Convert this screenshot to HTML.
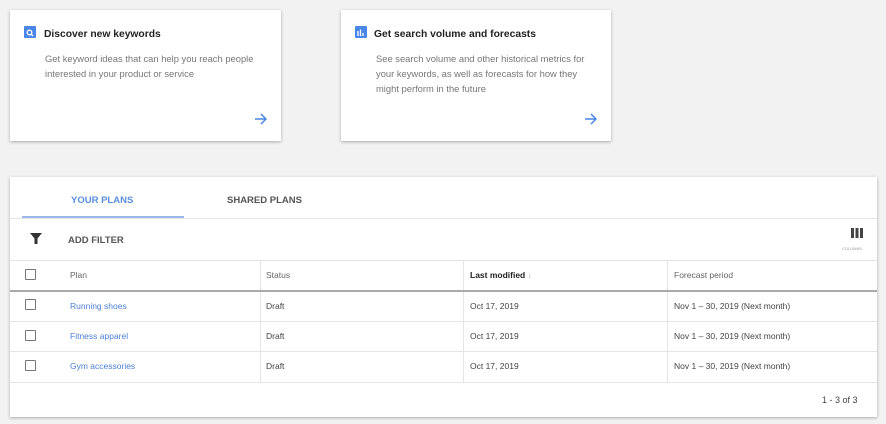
<!DOCTYPE html>
<html><head><style>
body{margin:0;width:886px;height:424px;background:#f2f2f2;font-family:"Liberation Sans",sans-serif;position:relative;overflow:hidden}
.a{position:absolute}
.card{position:absolute;background:#fff;box-shadow:0 1px 3px rgba(0,0,0,.3);top:10px;height:131px}
.t{font-size:10.3px;font-weight:bold;color:#222}
.d{font-size:9.4px;color:#777;line-height:15px}
.ic{width:12px;height:12px;background:#4a86e8;border-radius:1px}
.tbl{position:absolute;left:10px;top:177px;width:867px;height:240px;background:#fff;box-shadow:0 1px 3px rgba(0,0,0,.3)}
.h{height:1px;background:#e4e4e4;position:absolute;left:0;width:867px}
.v{width:1px;background:#e4e4e4;position:absolute}
.cb{position:absolute;left:15px;width:9px;height:9px;border:1.5px solid #777;border-radius:1px}
.c{position:absolute;font-size:8.5px;color:#444}
.l{color:#4a7fd8}
</style></head><body>
<div class="card" style="left:10px;width:271px">
 <div class="a ic" style="left:14px;top:16px"><svg width="12" height="12"><circle cx="5.5" cy="5.5" r="2.3" fill="none" stroke="#fff" stroke-width="1.3"/><path d="M7.2 7.2L9 9" stroke="#fff" stroke-width="1.4"/></svg></div>
 <div class="a t" style="left:34px;top:19px">Discover new keywords</div>
 <div class="a d" style="left:35px;top:41px;width:230px">Get keyword ideas that can help you reach people interested in your product or service</div>
 <svg class="a" style="left:244px;top:103px" width="13" height="12"><path d="M1 6H12M7 1L12 6L7 11" fill="none" stroke="#4a86e8" stroke-width="1.5"/></svg>
</div>
<div class="card" style="left:341px;width:270px">
 <div class="a ic" style="left:14px;top:16px"><svg width="12" height="12"><path d="M3 9V4M5.5 9V2.5M8 9V6" stroke="#fff" stroke-width="1.3"/></svg></div>
 <div class="a t" style="left:33px;top:19px">Get search volume and forecasts</div>
 <div class="a d" style="left:35px;top:41px;width:222px">See search volume and other historical metrics for your keywords, as well as forecasts for how they might perform in the future</div>
 <svg class="a" style="left:243px;top:103px" width="13" height="12"><path d="M1 6H12M7 1L12 6L7 11" fill="none" stroke="#4a86e8" stroke-width="1.5"/></svg>
</div>
<div class="tbl">
 <div class="a" style="left:61px;top:18px;font-size:9.5px;font-weight:bold;color:#5a8ee0">YOUR PLANS</div>
 <div class="a" style="left:217px;top:18px;font-size:9.5px;font-weight:bold;color:#555">SHARED PLANS</div>
 <div class="a" style="left:12px;top:39px;width:162px;height:2px;background:#9ab8ec"></div>
 <div class="h" style="top:41px"></div>
 <svg class="a" style="left:20px;top:56px" width="12" height="12"><path d="M0 0H12L7.5 5.5V11H4.5V5.5Z" fill="#333"/></svg>
 <div class="a" style="left:58px;top:58px;font-size:9.5px;font-weight:bold;color:#555">ADD FILTER</div>
 <svg class="a" style="left:841px;top:51px" width="12" height="10"><rect x="0" y="0" width="3" height="10" fill="#444"/><rect x="4.5" width="3" height="10" fill="#444"/><rect x="9" width="3" height="10" fill="#444"/></svg>
 <div class="a" style="left:832px;top:69px;font-size:4px;color:#999">COLUMNS</div>
 <div class="h" style="top:83px"></div>
 <div class="v" style="left:250px;top:83px;height:122px"></div>
 <div class="v" style="left:453px;top:83px;height:122px"></div>
 <div class="v" style="left:657px;top:83px;height:122px"></div>
 <div class="cb" style="top:92px"></div>
 <div class="c" style="left:60px;top:93px;color:#666">Plan</div>
 <div class="c" style="left:256px;top:93px;color:#666">Status</div>
 <div class="c" style="left:460px;top:93px;font-weight:bold;color:#222">Last modified <span style="color:#aaa;font-weight:normal">↓</span></div>
 <div class="c" style="left:664px;top:93px;color:#666">Forecast period</div>
 <div class="h" style="top:113px;height:2px;background:#aaa"></div>
 <div class="cb" style="top:122px"></div>
 <div class="c l" style="left:60px;top:124px">Running shoes</div>
 <div class="c" style="left:256px;top:124px">Draft</div>
 <div class="c" style="left:460px;top:124px">Oct 17, 2019</div>
 <div class="c" style="left:664px;top:124px">Nov 1 – 30, 2019 (Next month)</div>
 <div class="h" style="top:144px"></div>
 <div class="cb" style="top:153px"></div>
 <div class="c l" style="left:60px;top:154px">Fitness apparel</div>
 <div class="c" style="left:256px;top:154px">Draft</div>
 <div class="c" style="left:460px;top:154px">Oct 17, 2019</div>
 <div class="c" style="left:664px;top:154px">Nov 1 – 30, 2019 (Next month)</div>
 <div class="h" style="top:174px"></div>
 <div class="cb" style="top:183px"></div>
 <div class="c l" style="left:60px;top:184px">Gym accessories</div>
 <div class="c" style="left:256px;top:184px">Draft</div>
 <div class="c" style="left:460px;top:184px">Oct 17, 2019</div>
 <div class="c" style="left:664px;top:184px">Nov 1 – 30, 2019 (Next month)</div>
 <div class="h" style="top:205px"></div>
 <div class="c" style="left:812px;top:218px;font-size:9px">1 - 3 of 3</div>
</div>
</body></html>
